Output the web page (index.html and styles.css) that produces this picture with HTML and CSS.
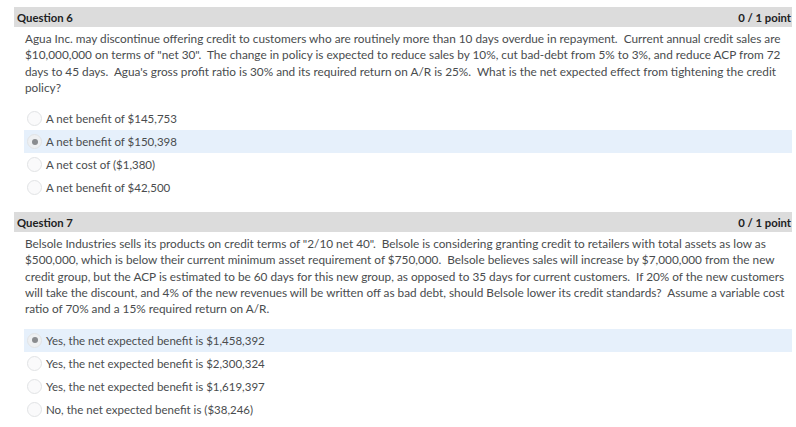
FILE: index.html
```html
<!DOCTYPE html>
<html>
<head>
<meta charset="utf-8">
<link rel="stylesheet" href="styles.css">
</head>
<body>
<div class="page">
  <section class="question">
    <div class="q-head"><span class="q-title">Question 6</span><span class="q-score">0 / 1 point</span></div>
    <p class="q-text">Agua Inc. may discontinue offering credit to customers who are routinely more than 10 days overdue in repayment.&nbsp; Current annual credit sales are<br>$10,000,000 on terms of "net 30".&nbsp; The change in policy is expected to reduce sales by 10%, cut bad-debt from 5% to 3%, and reduce ACP from 72<br>days to 45 days.&nbsp; Agua's gross profit ratio is 30% and its required return on A/R is 25%.&nbsp; What is the net expected effect from tightening the credit<br>policy?</p>
    <ul class="options">
      <li class="option"><span class="radio"></span>A net benefit of $145,753</li>
      <li class="option selected"><span class="radio"></span>A net benefit of $150,398</li>
      <li class="option"><span class="radio"></span>A net cost of ($1,380)</li>
      <li class="option"><span class="radio"></span>A net benefit of $42,500</li>
    </ul>
  </section>
  <section class="question">
    <div class="q-head"><span class="q-title">Question 7</span><span class="q-score">0 / 1 point</span></div>
    <p class="q-text">Belsole Industries sells its products on credit terms of "2/10 net 40".&nbsp; Belsole is considering granting credit to retailers with total assets as low as<br>$500,000, which is below their current minimum asset requirement of $750,000.&nbsp; Belsole believes sales will increase by $7,000,000 from the new<br>credit group, but the ACP is estimated to be 60 days for this new group, as opposed to 35 days for current customers.&nbsp; If 20% of the new customers<br>will take the discount, and 4% of the new revenues will be written off as bad debt, should Belsole lower its credit standards?&nbsp; Assume a variable cost<br>ratio of 70% and a 15% required return on A/R.</p>
    <ul class="options">
      <li class="option selected"><span class="radio"></span>Yes, the net expected benefit is $1,458,392</li>
      <li class="option"><span class="radio"></span>Yes, the net expected benefit is $2,300,324</li>
      <li class="option"><span class="radio"></span>Yes, the net expected benefit is $1,619,397</li>
      <li class="option"><span class="radio"></span>No, the net expected benefit is ($38,246)</li>
    </ul>
  </section>
</div>
</body>
</html>
```
FILE: styles.css
```css
* { box-sizing: border-box; }
html, body { margin: 0; padding: 0; background: #fff; }
body {
  font-family: Lato, "Liberation Sans", sans-serif;
  color: #494c4e;
}
.page {
  padding: 7px 4px 0 14px;
}
.question + .question {
  margin-top: 13px;
}
.q-head {
  display: flex;
  justify-content: space-between;
  align-items: center;
  height: 20px;
  background: #dcdcdc;
  padding: 0 1px 0 3px;
  font-size: 11.3px;
  font-weight: bold;
  color: #202122;
}
.q-text {
  margin: 4px 0 0 11px;
  font-size: 11.8px;
  line-height: 16.3px;
  white-space: nowrap;
}
.options {
  list-style: none;
  margin: 11px 0 0 10px;
  padding: 0;
}
.option {
  display: flex;
  align-items: center;
  height: 23px;
  font-size: 11.5px;
  padding-left: 3px;
}
.option.selected {
  background: #e6f0fb;
}
.radio {
  width: 15px;
  height: 15px;
  border-radius: 50%;
  border: 1px solid #e1e3e5;
  background: #fafafb;
  margin-right: 4px;
  display: flex;
  align-items: center;
  justify-content: center;
}
.selected .radio {
  background: #eef0f2;
}
.selected .radio::after {
  content: "";
  width: 6px;
  height: 6px;
  border-radius: 50%;
  background: #8a8c8f;
}
```
